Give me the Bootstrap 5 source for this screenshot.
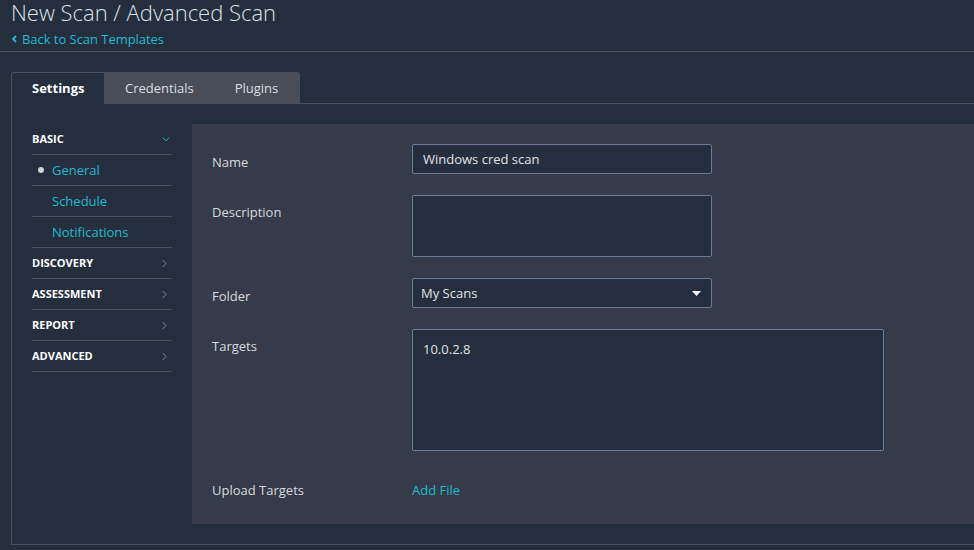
<!DOCTYPE html>
<html lang="en">
<head>
  <meta charset="UTF-8">
  <meta name="viewport" content="width=device-width, initial-scale=1.0">
  <title>New Scan / Advanced Scan</title>
  <link rel="stylesheet" href="https://cdn.jsdelivr.net/npm/bootstrap@5.3.0/dist/css/bootstrap.min.css">
  <style>
    html, body { height: 100%; overflow: hidden; }
    body { background: #252e3d; color: #e0e2e5; font-family: "Open Sans", sans-serif; font-size: 13px; }
    a { color: #1fbbd0; text-decoration: none; }
    .page-head { height: 52px; padding: 0 11px; border-bottom: 1px solid #4a505c; }
    .page-title { font-size: 22px; font-weight: 300; line-height: 24px; margin: 0; color: #dfe1e4; }
    .back-link { display: flex; align-items: center; gap: 5px; line-height: 18px; margin-top: 6px; padding-left: 1px; letter-spacing: -.04px; }
    .scan-tabs { margin: 20px 0 0 11px; height: 32px; border-bottom: 1px solid #4a505c; }
    .scan-tabs .nav-link { height: 32px; padding: 0 21px; border: 0; border-radius: 0; background: #484d58; color: #dcdee1; line-height: 32px; font-size: 13px; }
    .scan-tabs .nav-item:first-child .nav-link { width: 93px; padding: 0 0 0 20px; background: #252e3d; color: #fff; font-weight: 700; border-top: 1px solid #4a505c; border-left: 1px solid #4a505c; border-radius: 3px 0 0 0; height: 33px; line-height: 31px; }
    .scan-tabs .nav-item:last-child .nav-link { padding: 0 22px 0 20px; border-radius: 0 3px 0 0; }
    .scan-body { margin-left: 11px; height: 441px; padding: 20px 0 20px 20px; border-left: 1px solid #4a505c; border-bottom: 1px solid #4a505c; }
    .side-nav { width: 140px; margin-right: 20px; }
    .side-nav .list-group-item { height: 31px; padding: 1px 0 0; background: transparent; border: 0; border-bottom: 1px solid #4a505c; border-radius: 0; display: flex; align-items: center; justify-content: space-between; }
    .side-head { color: #fff; font-size: 11px; font-weight: 700; }
    .side-head svg { margin-right: 5px; }
    .side-head svg.open { margin-right: 2px; }
    .side-nav .side-sub { color: #1fbbd0; padding-left: 20px; position: relative; }
    .side-sub.active-item::before { content: ""; position: absolute; left: 6px; top: 12px; width: 6px; height: 6px; border-radius: 50%; background: #d0d2d6; }
    .form-panel { height: 400px; background: #353b48; padding: 20px; }
    .form-row-item { display: flex; margin-bottom: 21px; }
    .form-row-item label { width: 200px; flex: none; padding-top: 8px; line-height: 20px; color: #d8dade; }
    .form-row-item label.tall-label { padding-top: 7px; }
    .form-row-item label.upload-label, .add-file { padding-top: 5px; line-height: 20px; }
    .form-control, .form-select { background-color: #252e3d; border: 1px solid #6d7c96; border-radius: 2px; color: #e0e2e5; font-size: 13px; height: 30px; box-shadow: none; }
    .form-control { padding: 0 10px; }
    .form-select { padding: 2px 8px 0; background-image: url("data:image/svg+xml,%3Csvg xmlns='http://www.w3.org/2000/svg' width='9' height='5'%3E%3Cpath d='M0 0h9L4.5 5z' fill='%23fff'/%3E%3C/svg%3E"); background-position: right 10px center; background-size: 9px 5px; }
    textarea.form-control { padding: 10px; resize: none; min-height: 0; }
    .w-300 { width: 300px; }
    .w-472 { width: 472px; }
    .form-control.desc-box { height: 62px; }
    .form-control.targets-box { height: 122px; }
  </style>
</head>
<body>
  <div class="page-head">
    <h1 class="page-title">New Scan / Advanced Scan</h1>
    <a href="#" class="back-link">
      <svg width="5" height="8" viewBox="0 0 5 8"><path d="M4 1 1.2 4 4 7" fill="none" stroke="#1fbbd0" stroke-width="2"/></svg>
      Back to Scan Templates
    </a>
  </div>

  <ul class="nav scan-tabs">
    <li class="nav-item"><a class="nav-link" href="#">Settings</a></li>
    <li class="nav-item"><a class="nav-link" href="#">Credentials</a></li>
    <li class="nav-item"><a class="nav-link" href="#">Plugins</a></li>
  </ul>

  <div class="scan-body d-flex">
    <div class="side-nav list-group flex-none">
      <div class="list-group-item side-head">BASIC
        <svg class="open" width="8" height="5" viewBox="0 0 8 5"><path d="M1 .7 4 3.9 7 .7" fill="none" stroke="#1fbbd0"/></svg>
      </div>
      <a href="#" class="list-group-item side-sub active-item">General</a>
      <a href="#" class="list-group-item side-sub">Schedule</a>
      <a href="#" class="list-group-item side-sub">Notifications</a>
      <div class="list-group-item side-head">DISCOVERY
        <svg width="5" height="9" viewBox="0 0 5 9"><path d="M.7 1 4 4.5 .7 8" fill="none" stroke="#7c8799"/></svg>
      </div>
      <div class="list-group-item side-head">ASSESSMENT
        <svg width="5" height="9" viewBox="0 0 5 9"><path d="M.7 1 4 4.5 .7 8" fill="none" stroke="#7c8799"/></svg>
      </div>
      <div class="list-group-item side-head">REPORT
        <svg width="5" height="9" viewBox="0 0 5 9"><path d="M.7 1 4 4.5 .7 8" fill="none" stroke="#7c8799"/></svg>
      </div>
      <div class="list-group-item side-head">ADVANCED
        <svg width="5" height="9" viewBox="0 0 5 9"><path d="M.7 1 4 4.5 .7 8" fill="none" stroke="#7c8799"/></svg>
      </div>
    </div>

    <form class="form-panel flex-grow-1">
      <div class="form-row-item">
        <label for="scanName">Name</label>
        <input type="text" id="scanName" class="form-control w-300" value="Windows cred scan">
      </div>
      <div class="form-row-item">
        <label for="scanDesc" class="tall-label">Description</label>
        <textarea id="scanDesc" class="form-control w-300 desc-box"></textarea>
      </div>
      <div class="form-row-item">
        <label for="scanFolder">Folder</label>
        <select id="scanFolder" class="form-select w-300"><option>My Scans</option></select>
      </div>
      <div class="form-row-item">
        <label for="scanTargets" class="tall-label">Targets</label>
        <textarea id="scanTargets" class="form-control w-472 targets-box">10.0.2.8</textarea>
      </div>
      <div class="form-row-item mt-4">
        <label class="upload-label">Upload Targets</label>
        <a href="#" class="add-file">Add File</a>
      </div>
    </form>
  </div>

  <script src="https://cdn.jsdelivr.net/npm/bootstrap@5.3.0/dist/js/bootstrap.bundle.min.js"></script>
</body>
</html>
